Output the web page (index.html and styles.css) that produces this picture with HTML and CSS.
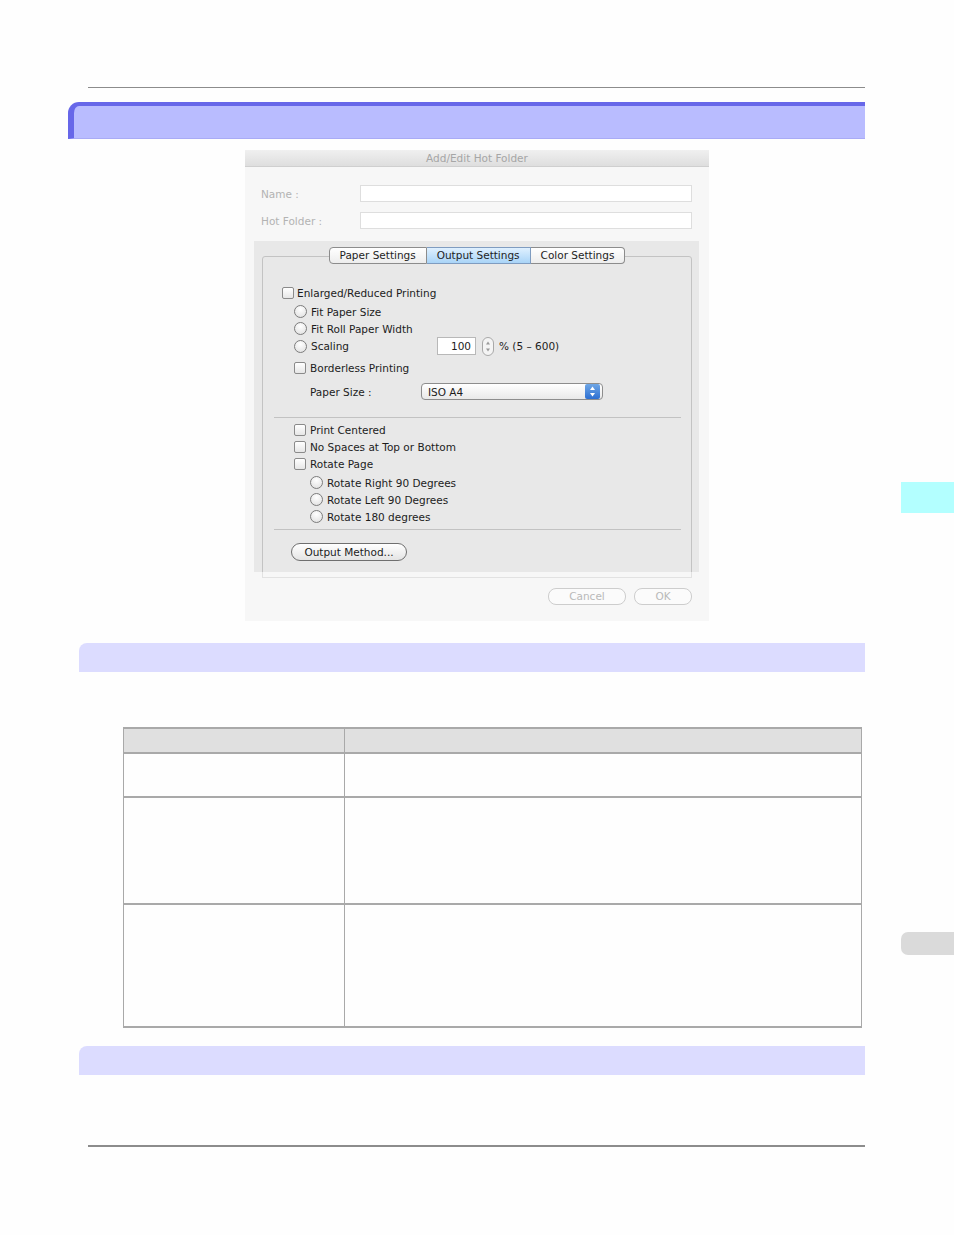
FILE: index.html
```html
<!DOCTYPE html>
<html lang="en">
<head>
    <meta charset="UTF-8">
    <title>Add/Edit Hot Folder - Output Settings</title>
    <link rel="stylesheet" href="styles.css">
</head>
<body>

<div class="page">
    <div class="top-rule"></div>
    <div class="title-bar"></div>

    <!-- Dialog screenshot -->
    <div class="dialog">
        <div class="dialog-title">Add/Edit Hot Folder</div>

        <div class="field-row first">
            <span class="field-label">Name :</span>
            <span class="field-input"></span>
        </div>
        <div class="field-row">
            <span class="field-label">Hot Folder :</span>
            <span class="field-input"></span>
        </div>

        <div class="panel">
            <div class="tab-box">
                <div class="tabs">
                    <span class="tab">Paper Settings</span>
                    <span class="tab selected">Output Settings</span>
                    <span class="tab">Color Settings</span>
                </div>

                <div class="opts">
                    <div class="row r1"><span class="check"></span><span class="lbl-tight">Enlarged/Reduced Printing</span></div>
                    <div class="row r2 ind1"><span class="radio"></span>Fit Paper Size</div>
                    <div class="row ind1"><span class="radio"></span>Fit Roll Paper Width</div>
                    <div class="row scaling ind1">
                        <span class="radio"></span><span class="scale-label">Scaling</span>
                        <span class="num-input">100</span>
                        <span class="spinner">
                            <svg width="12" height="19" viewBox="0 0 12 19">
                                <rect x="0.5" y="0.5" width="11" height="18" rx="5.5" fill="#f4f4f4" stroke="#a8a8a8"/>
                                <path d="M4 7.5 L6 4.5 L8 7.5 Z" fill="#9a9a9a"/>
                                <path d="M4 11.5 L6 14.5 L8 11.5 Z" fill="#9a9a9a"/>
                            </svg>
                        </span>
                        <span class="range">% (5 &ndash; 600)</span>
                    </div>
                    <div class="row r5 ind1"><span class="check"></span>Borderless Printing</div>
                    <div class="row r6 ind2">
                        <span class="paper-label">Paper Size :</span>
                        <span class="select">
                            <span class="select-text">ISO A4</span>
                            <span class="select-cap">
                                <svg width="15" height="15" viewBox="0 0 15 15">
                                    <path d="M5 6 L7.5 2.5 L10 6 Z" fill="#fff"/>
                                    <path d="M5 9 L7.5 12.5 L10 9 Z" fill="#fff"/>
                                </svg>
                            </span>
                        </span>
                    </div>

                    <div class="sep first-sep"></div>

                    <div class="row r7 ind1"><span class="check"></span>Print Centered</div>
                    <div class="row ind1"><span class="check"></span>No Spaces at Top or Bottom</div>
                    <div class="row ind1"><span class="check"></span>Rotate Page</div>
                    <div class="row r10 ind2"><span class="radio"></span>Rotate Right 90 Degrees</div>
                    <div class="row ind2"><span class="radio"></span>Rotate Left 90 Degrees</div>
                    <div class="row ind2"><span class="radio"></span>Rotate 180 degrees</div>

                    <div class="sep second-sep"></div>

                    <span class="pill-button">Output Method...</span>
                </div>
            </div>
        </div>
        <div class="panel-tail"></div>

        <div class="dialog-buttons">
            <span class="faded-button cancel">Cancel</span>
            <span class="faded-button ok">OK</span>
        </div>
    </div>

    <div class="section-bar second"></div>

    <table class="info-table">
        <thead>
            <tr><th class="col1"></th><th class="col2"></th></tr>
        </thead>
        <tbody>
            <tr class="row-a"><td></td><td></td></tr>
            <tr class="row-b"><td></td><td></td></tr>
            <tr class="row-c"><td></td><td></td></tr>
        </tbody>
    </table>

    <div class="section-bar third"></div>

    <div class="bottom-rule"></div>

    <!-- chapter tabs on the right edge -->
    <div class="side-tab cyan"></div>
    <div class="side-tab grey"></div>
</div>

</body>
</html>
```

FILE: styles.css
```css
body {
    margin: 0;
    background-color: #fefefe;
    font-family: "DejaVu Sans", Verdana, sans-serif;
}
.page {
    position: relative;
    width: 954px;
    height: 1235px;
    overflow: hidden;
}
.top-rule {
    margin: 87px 0 0 88px;
    width: 777px;
    height: 1px;
    background-color: #8c8c8c;
}
.title-bar {
    margin: 14px 0 0 68px;
    width: 791px;
    height: 32px;
    background-color: #b9bcff;
    border-top: 4px solid #6767e9;
    border-left: 6px solid #6767e9;
    border-bottom: 1px solid #a9abf6;
    border-top-left-radius: 11px;
}

/* ---------- dialog ---------- */
.dialog {
    margin: 11px 0 0 245px;
    width: 464px;
    height: 471px;
    background-color: #f7f7f7;
    font-size: 10.5px;
    color: #1c1c1c;
}
.dialog-title {
    height: 16px;
    line-height: 16px;
    text-align: center;
    color: #a6a6a6;
    background: linear-gradient(#f0f0f0, #dedede);
    border-bottom: 1px solid #cfcfcf;
}
.field-row {
    display: flex;
    align-items: center;
    height: 17px;
    margin-top: 10px;
    padding-left: 16px;
}
.field-row.first {
    margin-top: 18px;
}
.field-label {
    width: 99px;
    color: #b3b3b3;
}
.field-input {
    width: 330px;
    height: 15px;
    background-color: #fff;
    border: 1px solid #dedede;
}
.panel {
    margin: 12px 0 0 9px;
    width: 445px;
    height: 316px;
    padding-top: 15px;
    background-color: #e8e8e8;
    overflow: hidden;
}
.tab-box {
    margin-left: 8px;
    width: 428px;
    height: 340px;
    border: 1px solid #c3c3c3;
    border-radius: 3px;
}
.tabs {
    display: flex;
    justify-content: center;
    margin-top: -10px;
}
.tab {
    height: 15px;
    line-height: 15px;
    padding: 0 10px;
    border: 1px solid #8c8c8c;
    border-left: none;
    background: linear-gradient(#ffffff, #ededed);
    color: #1e1e1e;
}
.tab:first-child {
    border-left: 1px solid #8c8c8c;
    border-radius: 4px 0 0 4px;
}
.tab:last-child {
    border-radius: 0 4px 4px 0;
}
.tab.selected {
    background: linear-gradient(#dff0ff, #a9d4f7);
    border-color: #7f9cc0;
}
.opts {
    padding: 20px 0 0 19px;
}
.row {
    display: flex;
    align-items: center;
    height: 17px;
}
.r2 { margin-top: 2px; }
.ind1 { padding-left: 12px; }
.ind2 { padding-left: 28px; }
.check {
    width: 10px;
    height: 10px;
    margin-right: 4px;
    border: 1px solid #8a8a8a;
    border-radius: 2px;
    background: linear-gradient(#ffffff, #e6e6e6);
}
.lbl-tight {
    margin-left: -1px;
}
.radio {
    width: 11px;
    height: 11px;
    margin-right: 4px;
    border: 1px solid #7c7c7c;
    border-radius: 50%;
    background: radial-gradient(circle at 50% 30%, #ffffff, #dedede);
}
.scaling {
    height: 18px;
}
.scale-label {
    width: 126px;
}
.num-input {
    width: 33px;
    height: 16px;
    line-height: 17px;
    padding-right: 4px;
    text-align: right;
    background-color: #fff;
    border: 1px solid #b8b8b8;
}
.spinner {
    display: flex;
    margin: 0 5px 0 6px;
}
.r5 { margin-top: 4px; }
.r6 { margin-top: 7px; }
.paper-label {
    width: 111px;
}
.select {
    display: flex;
    align-items: center;
    width: 180px;
    height: 15px;
    border: 1px solid #8d8d8d;
    border-radius: 4px;
    background: linear-gradient(#ffffff, #e9e9e9);
    overflow: hidden;
}
.select-text {
    flex: 1;
    padding-left: 6px;
}
.select-cap {
    display: flex;
    width: 15px;
    height: 15px;
    margin-right: 2px;
    background: linear-gradient(#6fa7e6, #2d6fd2);
    border-radius: 2px;
}
.sep {
    margin-left: -8px;
    width: 407px;
    height: 1px;
    background-color: #c2c2c2;
}
.first-sep { margin-top: 17px; }
.r7 { margin-top: 3px; }
.r10 { margin-top: 2px; }
.second-sep { margin-top: 4px; }
.pill-button {
    display: inline-block;
    margin: 13px 0 0 9px;
    width: 114px;
    height: 16px;
    line-height: 16px;
    text-align: center;
    border: 1px solid #6f6f6f;
    border-radius: 9px;
    background: linear-gradient(#ffffff, #e4e4e4);
}
.panel-tail {
    margin-left: 17px;
    width: 428px;
    height: 5px;
    border: 1px solid #e2e2e2;
    border-top: none;
}
.dialog-buttons {
    display: flex;
    justify-content: flex-end;
    gap: 8px;
    margin-top: 10px;
    padding-right: 17px;
}
.faded-button {
    height: 15px;
    line-height: 15px;
    text-align: center;
    color: #b9b9b9;
    border: 1px solid #cdcdcd;
    border-radius: 8px;
    background-color: #fbfbfb;
}
.cancel { width: 76px; }
.ok { width: 56px; }

/* ---------- page sections ---------- */
.section-bar {
    margin-left: 79px;
    width: 786px;
    height: 29px;
    background-color: #dcdcff;
    border-top-left-radius: 8px;
}
.section-bar.second {
    margin-top: 22px;
}
.section-bar.third {
    margin-top: 18px;
}
.info-table {
    margin: 55px 0 0 123px;
    width: 739px;
    border-collapse: collapse;
    table-layout: fixed;
}
.info-table th,
.info-table td {
    padding: 0;
    border-left: 1px solid #a9a9a9;
    border-right: 1px solid #a9a9a9;
    border-bottom: 2px solid #a9a9a9;
}
.info-table th {
    height: 23px;
    background-color: #e0e0e0;
    border-top: 2px solid #a9a9a9;
}
.col1 { width: 220px; }
.row-a td { height: 42px; }
.row-b td { height: 105px; }
.row-c td { height: 121px; }
.bottom-rule {
    margin: 70px 0 0 88px;
    width: 777px;
    height: 2px;
    background-color: #8c8c8c;
}
.side-tab {
    position: absolute;
    right: 0;
    width: 53px;
}
.side-tab.cyan {
    top: 482px;
    height: 31px;
    background-color: #b3ffff;
}
.side-tab.grey {
    top: 932px;
    height: 23px;
    background-color: #dadada;
    border-radius: 7px 0 0 7px;
}
```
